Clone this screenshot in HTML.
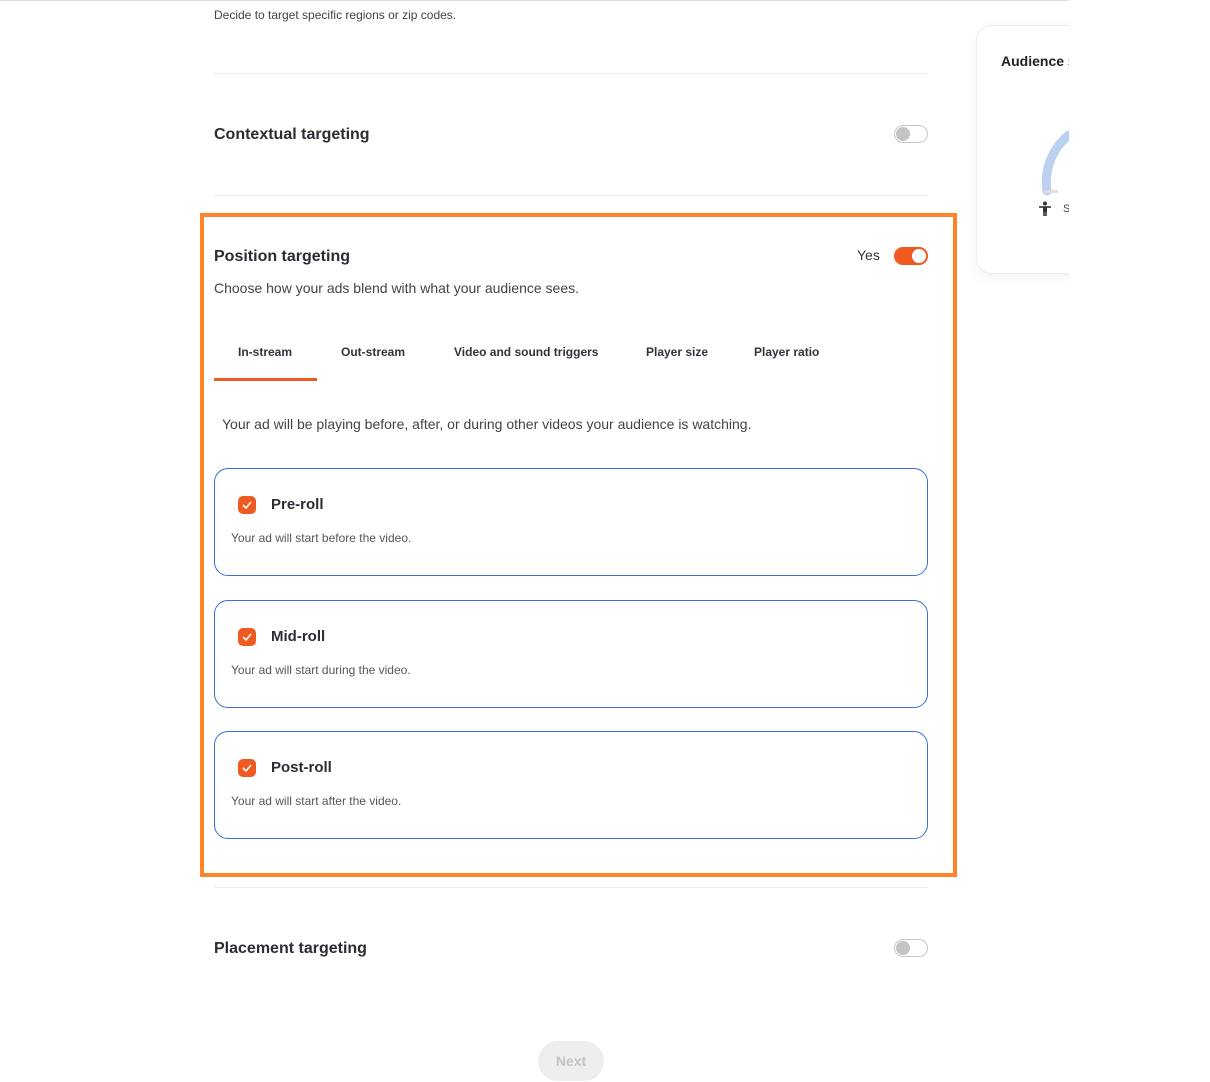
<!DOCTYPE html>
<html><head><meta charset="utf-8"><style>
*{box-sizing:border-box;margin:0;padding:0}
body{width:1210px;height:1082px;background:#fff;font-family:"Liberation Sans",sans-serif;color:#2a2a33;position:relative;overflow:hidden}
.a{position:absolute}
.t{font-size:16px;font-weight:bold;color:#2c2c35}
.hr{position:absolute;left:214px;width:714px;height:1px;background:#ececf2}
.tog{position:absolute;width:34px;height:18px;border-radius:9px;border:1px solid #c8c8c8;background:#fff}
.tog::after{content:"";position:absolute;left:1px;top:1px;width:14px;height:14px;border-radius:50%;background:#c4c4c4}
.tab{position:absolute;top:345px;font-size:12px;font-weight:bold;color:#33333d}
.card{position:absolute;left:214px;width:714px;height:108px;border:1px solid #3b6fd6;border-radius:14px;background:#fff}
.cb{position:absolute;left:23px;top:27px;width:18px;height:18px;border-radius:5px;background:#ee5a1f}
.cb svg{position:absolute;left:4px;top:4px}
.ct{position:absolute;left:56px;top:27px;font-size:15px;font-weight:bold;color:#2c2c35}
.cd{position:absolute;left:16px;top:62px;font-size:12px;color:#55555f}
</style></head><body>
<div class="a" style="left:0;top:0;width:1069px;height:1px;background:#dcdcee"></div>
<div class="a" style="left:214px;top:8px;font-size:12px;color:#444">Decide to target specific regions or zip codes.</div>
<div class="hr" style="top:73px"></div>
<div class="a t" style="left:214px;top:126px">Contextual targeting</div>
<div class="tog" style="left:894px;top:125px"></div>
<div class="hr" style="top:195px"></div>

<div class="a" style="left:976px;top:25px;width:120px;height:249px;border:1px solid #ececf4;border-radius:16px;box-shadow:0 4px 14px rgba(0,0,0,.05);background:#fff"></div>
<div class="a" style="left:1001px;top:53px;font-size:14px;font-weight:bold;color:#222">Audience s</div>
<svg class="a" style="left:1035px;top:125px" width="40" height="75"><path d="M12 66 A60 60 0 0 1 34 10" stroke="#bcd0f0" stroke-width="9" fill="none" stroke-linecap="round"/><rect x="9" y="65" width="14" height="3" fill="#ddd"/></svg>
<svg class="a" style="left:1038px;top:201px" width="14" height="16"><circle cx="7" cy="2.5" r="2" fill="#333"/><path d="M1 6 H13" stroke="#333" stroke-width="1.6"/><rect x="5" y="6" width="4" height="5" fill="#333"/><path d="M6 11 V15 M8 11 V15" stroke="#333" stroke-width="1.6"/></svg>
<div class="a" style="left:1063px;top:203px;font-size:11px;color:#444">S</div>
<div class="a" style="left:1069px;top:0;width:141px;height:1082px;background:#fff"></div>

<div class="a" style="left:200px;top:213px;width:757px;height:664px;border:4px solid #ff8328"></div>
<div class="a t" style="left:214px;top:248px">Position targeting</div>
<div class="a" style="left:857px;top:247px;font-size:14px;color:#333">Yes</div>
<div class="a" style="left:894px;top:247px;width:34px;height:18px;border-radius:9px;background:#ee5a1f"><div class="a" style="left:18px;top:2px;width:14px;height:14px;border-radius:50%;background:#fff"></div></div>
<div class="a" style="left:214px;top:280px;font-size:14px;color:#444">Choose how your ads blend with what your audience sees.</div>
<div class="tab" style="left:238px">In-stream</div>
<div class="tab" style="left:341px">Out-stream</div>
<div class="tab" style="left:454px">Video and sound triggers</div>
<div class="tab" style="left:646px">Player size</div>
<div class="tab" style="left:754px">Player ratio</div>
<div class="a" style="left:214px;top:378px;width:103px;height:3px;background:#ee5a1f"></div>
<div class="a" style="left:222px;top:416px;font-size:14px;color:#444">Your ad will be playing before, after, or during other videos your audience is watching.</div>

<div class="card" style="top:468px"><div class="cb"><svg width="10" height="10"><path d="M1 5 L4 8 L9 2" stroke="#fff" stroke-width="1.6" fill="none"/></svg></div><div class="ct">Pre-roll</div><div class="cd">Your ad will start before the video.</div></div>
<div class="card" style="top:600px"><div class="cb"><svg width="10" height="10"><path d="M1 5 L4 8 L9 2" stroke="#fff" stroke-width="1.6" fill="none"/></svg></div><div class="ct">Mid-roll</div><div class="cd">Your ad will start during the video.</div></div>
<div class="card" style="top:731px"><div class="cb"><svg width="10" height="10"><path d="M1 5 L4 8 L9 2" stroke="#fff" stroke-width="1.6" fill="none"/></svg></div><div class="ct">Post-roll</div><div class="cd">Your ad will start after the video.</div></div>

<div class="hr" style="top:887px"></div>
<div class="a t" style="left:214px;top:940px">Placement targeting</div>
<div class="tog" style="left:894px;top:939px"></div>
<div class="a" style="left:538px;top:1041px;width:66px;height:40px;border-radius:20px;background:#eeeeef;color:#c4c4c4;font-size:14px;font-weight:bold;text-align:center;line-height:40px">Next</div>
</body></html>
